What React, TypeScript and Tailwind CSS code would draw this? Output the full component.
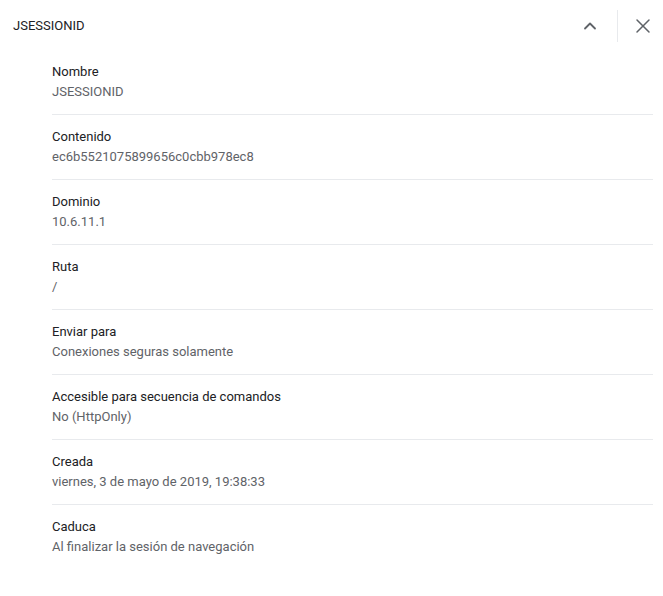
import { ChevronUp, X } from "lucide-react";

const rows = [
  { label: "Nombre", value: "JSESSIONID" },
  { label: "Contenido", value: "ec6b5521075899656c0cbb978ec8" },
  { label: "Dominio", value: "10.6.11.1" },
  { label: "Ruta", value: "/" },
  { label: "Enviar para", value: "Conexiones seguras solamente" },
  { label: "Accesible para secuencia de comandos", value: "No (HttpOnly)" },
  { label: "Creada", value: "viernes, 3 de mayo de 2019, 19:38:33" },
  { label: "Caduca", value: "Al finalizar la sesión de navegación" },
];

export default function App() {
  return (
    <div className="min-h-[596px] w-[663px] bg-white font-['Roboto',sans-serif] text-[13px] text-[#202124]">
      {/* header */}
      <div className="flex items-center pl-[13px] pt-[10px] pb-[8px]">
        <span className="flex-1 leading-5">JSESSIONID</span>
        <button className="flex h-8 w-[54px] items-center justify-center text-[#5f6368]">
          <ChevronUp size={20} strokeWidth={2.2} />
        </button>
        <div className="mr-[5px] h-8 w-px bg-[#e8eaed]" />
        <button className="flex h-8 w-[40px] items-center justify-center text-[#5f6368]">
          <X size={24} strokeWidth={1.5} />
        </button>
      </div>

      {/* fields */}
      <div className="pl-[52px] pr-[10px]">
        {rows.map((r, i) => (
          <div
            key={r.label}
            className={
              i < rows.length - 1
                ? "border-b border-[#e8eaed] py-3"
                : "py-3"
            }
          >
            <div className="leading-5">{r.label}</div>
            <div className="leading-5 text-[#5f6368]">{r.value}</div>
          </div>
        ))}
      </div>
    </div>
  );
}
